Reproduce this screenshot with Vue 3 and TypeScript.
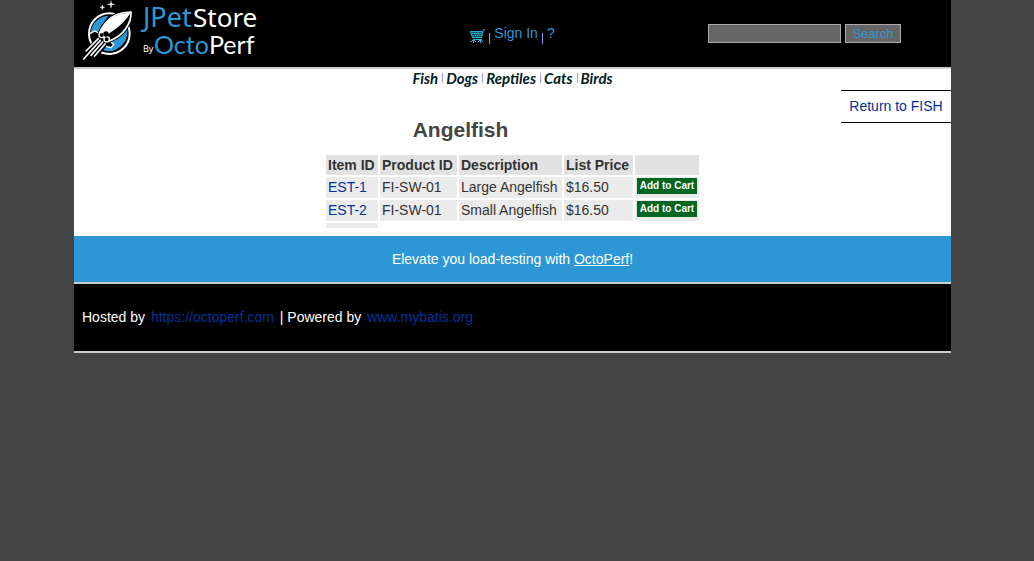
<script setup lang="ts">
interface Item {
  id: string
  product: string
  description: string
  price: string
}

const categories: string[] = ['Fish', 'Dogs', 'Reptiles', 'Cats', 'Birds']

const items: Item[] = [
  { id: 'EST-1', product: 'FI-SW-01', description: 'Large Angelfish', price: '$16.50' },
  { id: 'EST-2', product: 'FI-SW-01', description: 'Small Angelfish', price: '$16.50' },
]
</script>

<template>
  <div class="page">
    <header class="header">
      <a class="logo" href="#" aria-label="JPetStore by OctoPerf">
        <svg width="200" height="67" viewBox="0 0 200 67">
          <svg width="70" height="68" viewBox="0 0 210 204">
            <circle cx="106" cy="101" r="61" fill="#000" stroke="#fff" stroke-width="6" />
            <path d="M104 47 C74 49 52 69 50 101 L62 94 L72 98 L82 78 L96 58 Z" fill="#2d97d5" />
            <path d="M160 88 C162 116 149 138 125 149 C112 155 99 155 88 149 L99 138 L112 143 L118 133 L110 126 L130 117 L148 103 Z" fill="#2d97d5" />
            <path d="M48 101 L62 93 L74 99 M96 139 L112 143 L119 133 L110 126" fill="none" stroke="#fff" stroke-width="4" />
            <path d="M68 113 L26 156 L20 184 L76 172 L94 130 Z" fill="#000" />
            <path d="M171 36 C134 37 111 49 98 65 C87 78 80 88 77 99 L104 124 C124 116 143 104 155 86 C166 71 172 54 171 36 Z" fill="#000" stroke="#000" stroke-width="10" stroke-linejoin="round" />
            <path d="M171 36 C134 37 111 49 98 65 C87 78 80 88 77 99 L104 124 C124 116 143 104 155 86 C166 71 172 54 171 36 Z" fill="#000" stroke="#fff" stroke-width="5" stroke-linejoin="round" />
            <path d="M170 38 C134 39 111 51 98 66 C88 78 81 89 79 98 L94 108 C114 94 150 72 170 38 Z" fill="#fff" />
            <circle cx="83" cy="105" r="8" fill="#000" stroke="#fff" stroke-width="4" />
            <circle cx="98" cy="118" r="8" fill="#000" stroke="#fff" stroke-width="4" />
            <circle cx="96" cy="102" r="8" fill="#000" />
            <path d="M73 116 L36 153 M79 121 L29 177 M86 126 L51 166 M93 132 L62 168" fill="none" stroke="#fff" stroke-width="5" stroke-linecap="round" />
            <path d="M111 2 L113 11 L122 13 L113 15 L111 25 L109 15 L100 13 L109 11 Z M85 15 L87 20 L92 22 L87 24 L85 29 L83 24 L78 22 L83 20 Z" fill="#fff" stroke="#fff" />
          </svg>
          <text class="word" x="69" y="27" font-size="27" fill="#2d97d5">JPet</text>
          <text class="word" x="119" y="27" font-size="26" fill="#fff">Store</text>
          <text class="word" x="69" y="52" font-size="9" fill="#fff">By</text>
          <text class="round" x="80" y="54" font-size="25" fill="#2d97d5">Octo</text>
          <text class="round" x="135" y="54" font-size="25" fill="#fff">Perf</text>
        </svg>
      </a>

      <nav class="account" aria-label="Account">
        <a class="cart" href="#" aria-label="Cart">
          <svg width="15" height="15" viewBox="0 0 15 15" fill="none" stroke="#28b4d8">
            <path d="M0 2 H13 L11 9 H3 Z" fill="#0b5a6c" stroke="none" />
            <path d="M0 2.5 H12 M15 .5 H13.5 L11.5 8.5 H2.5 L.5 3 M3 10.5 H12 M2 11.5 H5 M9 11.5 H12 M3.5 12 V14 M10.5 12 V14 M0 12.5 H2 M5 12.5 H6 M8 12.5 H9 M12 12.5 H13" />
            <path d="M2 4.5 H12 M3 6.5 H12" stroke-dasharray="1 1" />
          </svg>
        </a>
        <span class="bar"></span>
        <a href="#">Sign In</a>
        <span class="bar"></span>
        <a href="#">?</a>
      </nav>

      <form class="search" @submit.prevent>
        <input type="text" aria-label="Search keyword" />
        <button type="submit">Search</button>
      </form>
    </header>

    <nav class="categories" aria-label="Categories">
      <a v-for="name in categories" :key="name" href="#">{{ name }}</a>
    </nav>

    <main class="content">
      <div class="heading">
        <h2>Angelfish</h2>
        <a class="back" href="#">Return to FISH</a>
      </div>

      <table>
        <colgroup>
          <col class="item" />
          <col class="product" />
          <col class="description" />
          <col class="price" />
          <col class="cart-action" />
        </colgroup>
        <thead>
          <tr>
            <th>Item ID</th>
            <th>Product ID</th>
            <th>Description</th>
            <th>List Price</th>
            <th></th>
          </tr>
        </thead>
        <tbody>
          <tr v-for="item in items" :key="item.id">
            <td><a href="#">{{ item.id }}</a></td>
            <td>{{ item.product }}</td>
            <td>{{ item.description }}</td>
            <td>{{ item.price }}</td>
            <td class="action"><a class="add" href="#">Add to Cart</a></td>
          </tr>
          <tr class="last">
            <td></td>
          </tr>
        </tbody>
      </table>
    </main>

    <div class="banner">Elevate you load-testing with <a href="#">OctoPerf</a>!</div>

    <footer class="footer">
      Hosted by <a href="#">https://octoperf.com</a> | Powered by <a href="#">www.mybatis.org</a>
    </footer>
  </div>
</template>

<style>
body {
  margin: 0;
  background: #444;
}
</style>

<style scoped>
.page {
  margin: 0 83px 0 74px;
  background: #fff;
  color: #333;
  font: 14px/16px "Liberation Sans", Arial, sans-serif;
}

a {
  color: #039;
  text-decoration: none;
}

.header {
  display: grid;
  grid-template-columns: 1fr auto 1fr;
  background: #000;
  border-bottom: 2px solid #ccc;
}

.logo,
.logo svg {
  display: block;
  overflow: visible;
}

.word {
  font-family: "Noto Sans", sans-serif;
}

.round {
  font-family: Lato, sans-serif;
}

.account {
  display: flex;
  align-items: flex-start;
  gap: 4px;
  padding-top: 25px;
}

.account a {
  color: #2d97d5;
}

.account .cart {
  padding-top: 4px;
}

.cart svg {
  display: block;
}

.bar {
  width: 1px;
  height: 11px;
  margin-top: 8px;
  background: #99f;
}

.search {
  display: flex;
  justify-content: flex-end;
  align-items: flex-start;
  gap: 4px;
  padding: 24px 50px 0 0;
}

.search input,
.search button {
  box-sizing: border-box;
  height: 19px;
  margin: 0;
  border: 1px solid #aaa;
  border-radius: 0;
  background: #666;
  color: #2d97d5;
  font: 13px/15px "Liberation Sans", Arial, sans-serif;
}

.search input {
  width: 133px;
  padding: 0 2px;
}

.search button {
  width: 56px;
  padding: 0;
}

.categories {
  display: flex;
  justify-content: center;
  height: 18px;
}

.categories a {
  padding: 0 4px;
  color: #022;
  font: italic bold 15px/18px Lato, sans-serif;
}

.categories a + a {
  background: linear-gradient(#99f, #99f) 0 4px / 1px 10px no-repeat;
}

.content {
  padding: 3px 0 6px;
}

.heading {
  display: flex;
  align-items: flex-start;
}

h2 {
  flex: 1;
  margin: 0;
  padding: 28px 0 11px 6px;
  color: #444;
  font-size: 21px;
  line-height: 24px;
  text-align: center;
}

.back {
  box-sizing: border-box;
  min-width: 110px;
  padding: 7px;
  border: solid #000;
  border-width: 1px 0;
  line-height: 17px;
  text-align: center;
}

table {
  margin: 0 auto;
  border-spacing: 2px;
}

.item {
  width: 52px;
}

.product {
  width: 77px;
}

.description {
  width: 103px;
}

.price {
  width: 69px;
}

.cart-action {
  width: 64px;
}

th,
td {
  height: 16px;
  padding: 2px;
  text-align: left;
}

th {
  background: #e2e2e2;
}

td {
  background: #ebebeb;
  line-height: 17px;
}

.action {
  padding: 1px 2px;
  vertical-align: top;
}

.add {
  display: block;
  background: #006622;
  color: #fff;
  font-size: 10px;
  font-weight: bold;
  line-height: 16px;
  text-align: center;
}

.last td {
  height: 1px;
}

.banner {
  padding: 15px 0;
  border-bottom: 2px solid #ccc;
  background: #2d97d5;
  color: #fff;
  text-align: center;
}

.banner a {
  color: #fff;
  text-decoration: underline;
}

.footer {
  padding: 25px 8px 26px;
  border-bottom: 2px solid #ccc;
  background: #000;
  color: #fff;
}

.footer a {
  margin: 0 2px;
}
</style>
